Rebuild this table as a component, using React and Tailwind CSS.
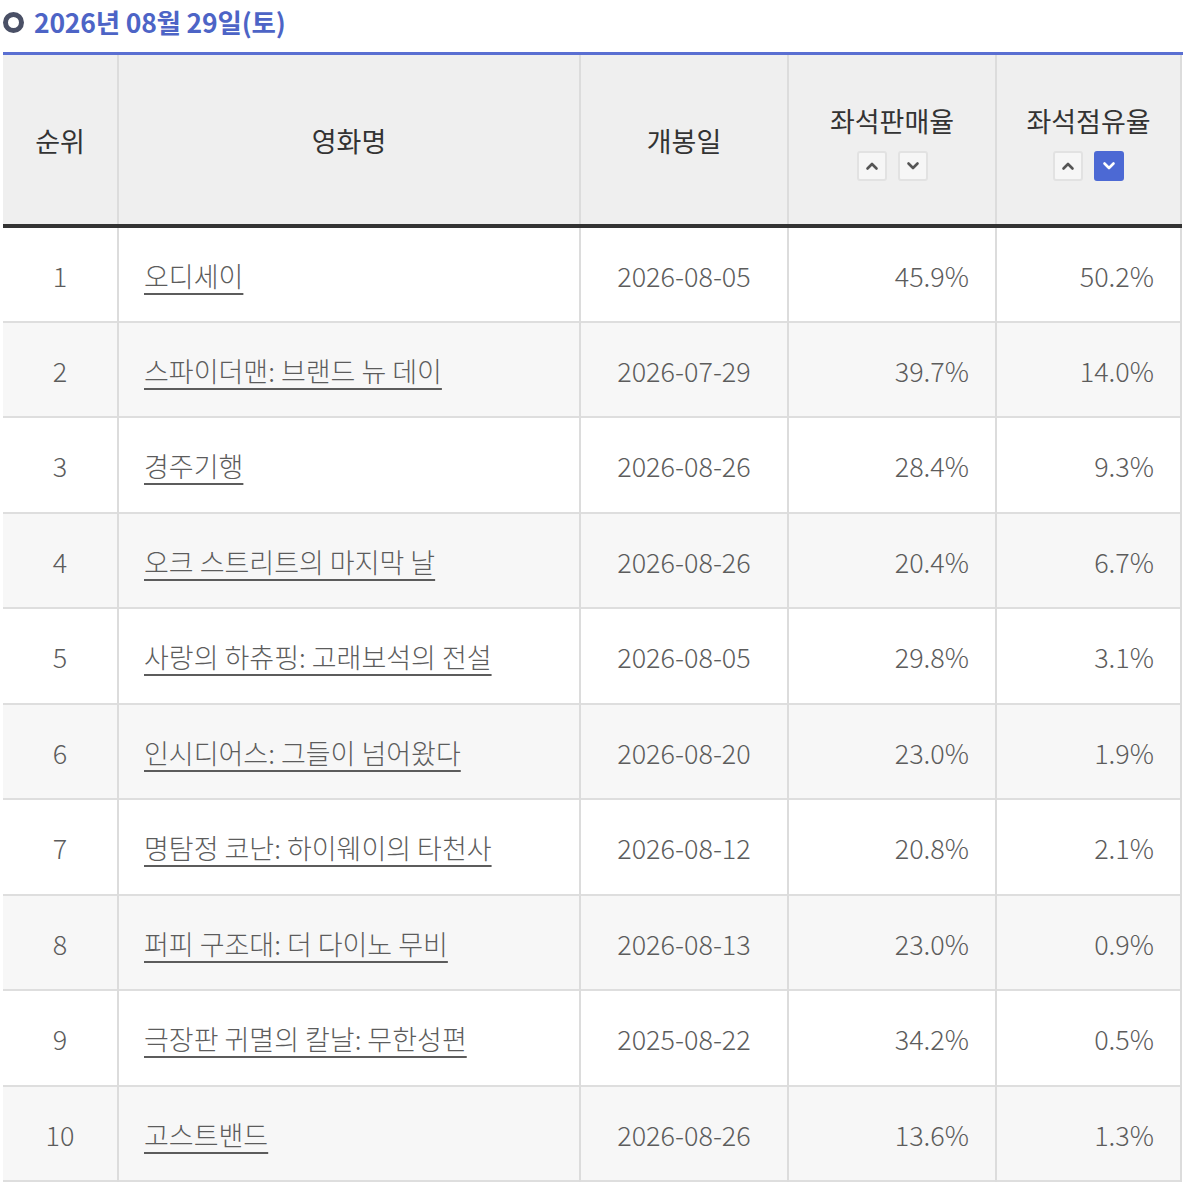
const rows = [
  { rank: 1, title: "오디세이", date: "2026-08-05", sale: "45.9%", share: "50.2%" },
  { rank: 2, title: "스파이더맨: 브랜드 뉴 데이", date: "2026-07-29", sale: "39.7%", share: "14.0%" },
  { rank: 3, title: "경주기행", date: "2026-08-26", sale: "28.4%", share: "9.3%" },
  { rank: 4, title: "오크 스트리트의 마지막 날", date: "2026-08-26", sale: "20.4%", share: "6.7%" },
  { rank: 5, title: "사랑의 하츄핑: 고래보석의 전설", date: "2026-08-05", sale: "29.8%", share: "3.1%" },
  { rank: 6, title: "인시디어스: 그들이 넘어왔다", date: "2026-08-20", sale: "23.0%", share: "1.9%" },
  { rank: 7, title: "명탐정 코난: 하이웨이의 타천사", date: "2026-08-12", sale: "20.8%", share: "2.1%" },
  { rank: 8, title: "퍼피 구조대: 더 다이노 무비", date: "2026-08-13", sale: "23.0%", share: "0.9%" },
  { rank: 9, title: "극장판 귀멸의 칼날: 무한성편", date: "2025-08-22", sale: "34.2%", share: "0.5%" },
  { rank: 10, title: "고스트밴드", date: "2026-08-26", sale: "13.6%", share: "1.3%" },
];

function Chevron({ up, active }) {
  return (
    <svg width="14" height="14" viewBox="0 0 14 14" fill="none">
      <path
        d={up ? "M2.5 9.5 L7 5 L11.5 9.5" : "M2.5 4.5 L7 9 L11.5 4.5"}
        stroke={active ? "#ffffff" : "#555"}
        strokeWidth="2.6"
        strokeLinecap="round"
        strokeLinejoin="round"
      />
    </svg>
  );
}

function SortButtons({ activeDown }) {
  return (
    <div className="flex justify-center gap-[11px] mt-[14px]">
      <button className="w-[30px] h-[30px] flex items-center justify-center rounded-[3px] border-2 border-[#e2e2e2] bg-[#f6f6f6]">
        <Chevron up />
      </button>
      <button
        className={
          activeDown
            ? "w-[30px] h-[30px] flex items-center justify-center rounded-[3px] border-2 border-[#4c69d4] bg-[#4c69d4]"
            : "w-[30px] h-[30px] flex items-center justify-center rounded-[3px] border-2 border-[#e2e2e2] bg-[#f6f6f6]"
        }
      >
        <Chevron active={activeDown} />
      </button>
    </div>
  );
}

const th = "border-x-2 border-[#dcdcdc] text-[27px] font-normal text-[#333]";
const td = "border-x-2 border-[#dcdcdc] pt-[3px] text-[27px] font-light text-[#5c5c5c]";

export default function App() {
  return (
    <div className="bg-white w-[1183px] pl-[3px] font-['Noto_Sans_CJK_KR','Noto_Sans',sans-serif]">
      <div className="flex items-center h-[45px] gap-[10px]">
        <span className="w-[21px] h-[21px] rounded-full border-[5px] border-[#4a5066] bg-white" />
        <span className="text-[26.5px] font-bold text-[#4d64c6] tracking-[-0.2px] leading-none -mt-[1px]">
          2026년 08월 29일(토)
        </span>
      </div>
      <div className="mt-[7px] border-t-[3px] border-[#5a6fd2]">
        <table className="w-[1178px] border-collapse table-fixed border-b-2 border-b-[#444]">
          <colgroup>
            <col className="w-[115px]" />
            <col className="w-[462px]" />
            <col className="w-[208px]" />
            <col className="w-[208px]" />
            <col className="w-[185px]" />
          </colgroup>
          <thead>
            <tr className="bg-[#efefef] h-[171px] border-b-4 border-[#333]">
              <th className={th + " border-l-0 pt-[3px]"}>순위</th>
              <th className={th + " pt-[3px]"}>영화명</th>
              <th className={th + " pt-[3px]"}>개봉일</th>
              <th className={th + " pt-[6px]"}>
                <div className="leading-[32px]">좌석판매율</div>
                <SortButtons />
              </th>
              <th className={th + " pt-[6px]"}>
                <div className="leading-[32px]">좌석점유율</div>
                <SortButtons activeDown />
              </th>
            </tr>
          </thead>
          <tbody>
            {rows.map((r, i) => (
              <tr
                key={r.rank}
                className={
                  i % 2 === 0
                    ? "h-[95.5px] bg-white border-b-2 border-[#dedede]"
                    : "h-[95.5px] bg-[#f7f7f7] border-b-2 border-[#dedede]"
                }
              >
                <td className={td + " border-l-0 text-center"}>{r.rank}</td>
                <td className={td + " pl-[25px]"}>
                  <a className="underline underline-offset-[6px] decoration-[1.5px]">{r.title}</a>
                </td>
                <td className={td + " text-center"}>{r.date}</td>
                <td className={td + " text-right pr-[26px]"}>{r.sale}</td>
                <td className={td + " text-right pr-[26px]"}>{r.share}</td>
              </tr>
            ))}
          </tbody>
        </table>
      </div>
    </div>
  );
}
